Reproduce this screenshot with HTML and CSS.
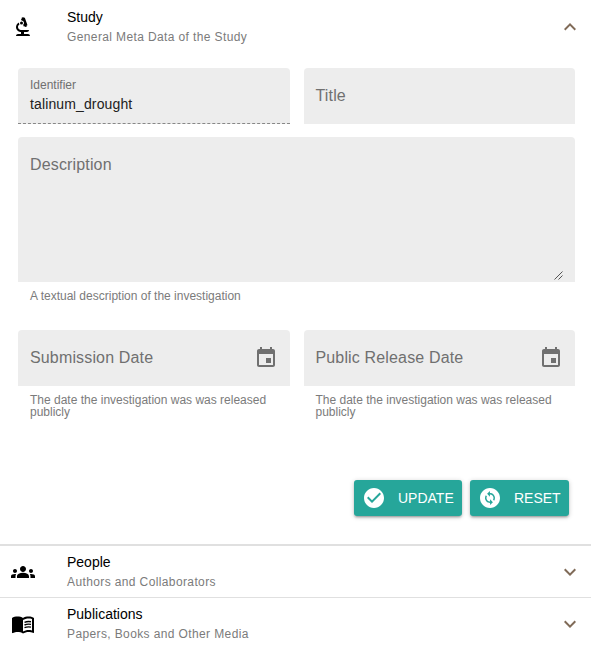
FILE: index.html
```html
<!DOCTYPE html>
<html lang="en">
<head>
<meta charset="utf-8">
<title>Study</title>
<link rel="stylesheet" href="styles.css">
</head>
<body>
<main>
  <section class="panel">
    <header class="item">
      <svg class="lead" viewBox="0 0 24 24"><path d="M7 19c-1.100 0-2 .9-2 2h14c0-1.100-.9-2-2-2h-4v-2h3c1.100 0 2-.9 2-2h-8c-1.660 0-3-1.340-3-3 0-1.090.59-2.040 1.460-2.560C8.170 9.030 8 8.540 8 8c0-.21.04-.42.09-.62C6.280 8.130 5 9.920 5 12c0 2.760 2.240 5 5 5v2z"/><path d="M10.560 5.510C11.910 5.540 13 6.640 13 8c0 .75-.33 1.410-.85 1.870l.59 1.620.94-.34.34.94 1.880-.68-.34-.94.94-.34-2.740-7.530-.94.34-.34-.94-1.880.68.34.94-.94.35z"/><circle cx="10.500" cy="8" r="1.500"/></svg>
      <div class="heading"><div class="title">Study</div><div class="caption">General Meta Data of the Study</div></div>
      <svg class="chevron" viewBox="0 0 24 24"><path d="M12 8l-6 6 1.410 1.410L12 10.830l4.590 4.580L18 14z"/></svg>
    </header>
    <div class="form">
      <div class="row">
        <div class="field readonly"><label class="small">Identifier</label><div class="value">talinum_drought</div></div>
        <div class="field"><label>Title</label></div>
      </div>
      <div class="block">
        <div class="field area"><label>Description</label>
          <svg class="grip" viewBox="0 0 9 9"><path d="M.5 8.500l8-8M4.500 8.500l4-4"/></svg>
        </div>
        <p class="hint">A textual description of the investigation</p>
      </div>
      <div class="row dates">
        <div>
          <div class="field"><label>Submission Date</label><svg class="event" viewBox="0 0 24 24"><path d="M17 12h-5v5h5v-5zM16 1v2H8V1H6v2H5c-1.110 0-1.990.9-1.990 2L3 19c0 1.100.89 2 2 2h14c1.100 0 2-.9 2-2V5c0-1.100-.9-2-2-2h-1V1h-2zm3 18H5V8h14v11z"/></svg></div>
          <p class="hint">The date the investigation was was released publicly</p>
        </div>
        <div>
          <div class="field"><label>Public Release Date</label><svg class="event" viewBox="0 0 24 24"><path d="M17 12h-5v5h5v-5zM16 1v2H8V1H6v2H5c-1.110 0-1.990.9-1.990 2L3 19c0 1.100.89 2 2 2h14c1.100 0 2-.9 2-2V5c0-1.100-.9-2-2-2h-1V1h-2zm3 18H5V8h14v11z"/></svg></div>
          <p class="hint">The date the investigation was was released publicly</p>
        </div>
      </div>
      <div class="actions">
        <button class="update"><svg viewBox="0 0 24 24"><path d="M12 2C6.480 2 2 6.480 2 12s4.480 10 10 10 10-4.480 10-10S17.520 2 12 2zm-2 15l-5-5 1.410-1.410L10 14.170l7.590-7.590L19 8l-9 9z"/></svg><span>UPDATE</span></button>
        <button class="reset"><svg viewBox="0 0 24 24"><path d="M12 2C6.480 2 2 6.480 2 12s4.480 10 10 10 10-4.480 10-10S17.520 2 12 2zM12.060 19v-2.010H12c-1.280 0-2.560-.49-3.540-1.460-1.710-1.710-1.920-4.350-.64-6.290l1.100 1.100c-.71 1.330-.53 3.010.59 4.130.7.7 1.620 1.030 2.540 1.010v-2.140l2.830 2.830zM16.170 14.760l-1.100-1.100c.71-1.330.53-3.010-.59-4.130C13.790 8.840 12.900 8.500 12 8.500h-.06v2.150L9.110 7.830 11.940 5v2.020c1.300-.02 2.610.45 3.600 1.450 1.700 1.700 1.910 4.350.63 6.290z"/></svg><span>RESET</span></button>
      </div>
    </div>
  </section>
  <section class="item people">
    <svg class="lead" viewBox="0 0 24 24"><path d="M12 12.750c1.630 0 3.070.39 4.240.9 1.080.48 1.760 1.560 1.760 2.730V18H6v-1.610c0-1.180.68-2.260 1.760-2.730 1.170-.52 2.610-.91 4.240-.91zM4 13c1.100 0 2-.9 2-2s-.9-2-2-2-2 .9-2 2 .9 2 2 2zM5.130 14.100C4.760 14.040 4.390 14 4 14c-.99 0-1.930.21-2.780.58C.48 14.900 0 15.620 0 16.430V18h4.500v-1.610c0-.83.23-1.610.63-2.290zM20 13c1.100 0 2-.9 2-2s-.9-2-2-2-2 .9-2 2 .9 2 2 2zM24 16.430c0-.81-.48-1.530-1.220-1.850C21.930 14.210 20.990 14 20 14c-.39 0-.76.04-1.130.1.4.68.63 1.460.63 2.290V18H24zM12 6c1.660 0 3 1.340 3 3s-1.340 3-3 3-3-1.340-3-3 1.340-3 3-3z"/></svg>
    <div class="heading"><div class="title">People</div><div class="caption">Authors and Collaborators</div></div>
    <svg class="chevron" viewBox="0 0 24 24"><path d="M7.410 8.590L12 13.170l4.590-4.580L18 10l-6 6-6-6z"/></svg>
  </section>
  <section class="item publications">
    <svg class="lead" viewBox="0 0 24 24"><path d="M21 5c-1.110-.35-2.330-.5-3.500-.5-1.950 0-4.050.4-5.500 1.500-1.450-1.100-3.550-1.500-5.500-1.500S2.450 4.900 1 6v14.650c0 .25.25.5.5.5.1 0 .15-.05.25-.05C3.100 20.450 5.050 20 6.500 20c1.950 0 4.050.4 5.500 1.500 1.350-.85 3.800-1.500 5.500-1.500 1.650 0 3.350.3 4.750 1.050.1.050.15.050.25.050.25 0 .5-.25.5-.5V6c-.6-.45-1.250-.75-2-1zm0 13.500c-1.100-.35-2.300-.5-3.500-.5-1.700 0-4.150.65-5.500 1.500V8c1.350-.85 3.800-1.500 5.500-1.500 1.200 0 2.400.15 3.500.5v11.500z"/><path class="lines" d="M13.500 10.300q3-1.300 6.500-.6M13.500 13q3-1.300 6.500-.6M13.500 15.700q3-1.300 6.500-.6"/></svg>
    <div class="heading"><div class="title">Publications</div><div class="caption">Papers, Books and Other Media</div></div>
    <svg class="chevron" viewBox="0 0 24 24"><path d="M7.410 8.590L12 13.170l4.590-4.580L18 10l-6 6-6-6z"/></svg>
  </section>
</main>
</body>
</html>
```
FILE: styles.css
```css
* { box-sizing: border-box; }
body {
  margin: 0;
  background: #fff;
  color: #000;
  font-family: "Liberation Sans", Arial, sans-serif;
  font-size: 14px;
  overflow: hidden;
}
svg { display: block; flex: none; fill: currentColor; }
.item { display: flex; align-items: center; height: 52px; padding: 0 9px 0 11px; }
.panel > .item { height: 54px; }
.lead { width: 24px; height: 24px; }
.heading { flex: 1; margin-left: 32px; }
.title { height: 20px; line-height: 20px; }
.caption { height: 20px; line-height: 20px; font-size: 12px; letter-spacing: 0.38px; color: #7b7b7b; }
.chevron { width: 24px; height: 24px; color: #806b58; }
.lines { fill: none; stroke: currentColor; stroke-width: 1.4; }

.form { padding: 14px 16px 0 18px; height: 490px; }
.row { display: grid; grid-template-columns: 1fr 1fr; gap: 14px; }
.field {
  display: flex;
  align-items: center;
  height: 56px;
  padding: 0 12px;
  background: #ededed;
  border-radius: 4px 4px 0 0;
}
.field label { flex: 1; font-size: 16px; letter-spacing: 0.15px; line-height: 20px; color: #707070; }
.readonly { flex-direction: column; align-items: stretch; padding-top: 9px; border-bottom: 1px dashed #888; }
.field .small { flex: none; height: 17px; line-height: 17px; font-size: 12px; letter-spacing: 0; }
.value { height: 21px; line-height: 21px; color: #212121; letter-spacing: 0.13px; }
.block { margin-top: 13px; }
.area { position: relative; height: 145px; align-items: flex-start; padding-top: 18px; }
.grip { position: absolute; right: 12px; bottom: 2px; width: 9px; height: 9px; fill: none; stroke: #555; stroke-width: 1; }
.hint { margin: 8px 12px 0; font-size: 12px; line-height: 12px; letter-spacing: 0; color: #7b7b7b; }
.dates { margin-top: 28px; }
.event { width: 24px; height: 24px; color: #707070; }
.actions { display: flex; justify-content: flex-end; gap: 8px; margin: 62px 6px 0 0; }
button {
  display: flex;
  align-items: center;
  height: 36px;
  padding: 0 8px;
  border: 0;
  border-radius: 3px;
  background: #26a69a;
  color: #fff;
  font: 14px "Liberation Sans", Arial, sans-serif;
  box-shadow: 0 1px 5px rgba(0, 0, 0, .2), 0 2px 2px rgba(0, 0, 0, .14), 0 3px 1px -2px rgba(0, 0, 0, .12);
}
button svg { width: 24px; height: 24px; margin-right: 12px; }
.update { width: 108px; }
.reset { width: 99px; }
.people { height: 54px; border-top: 2px solid #e0e0e0; border-bottom: 1px solid #e0e0e0; }
.publications { height: 52px; }
```
